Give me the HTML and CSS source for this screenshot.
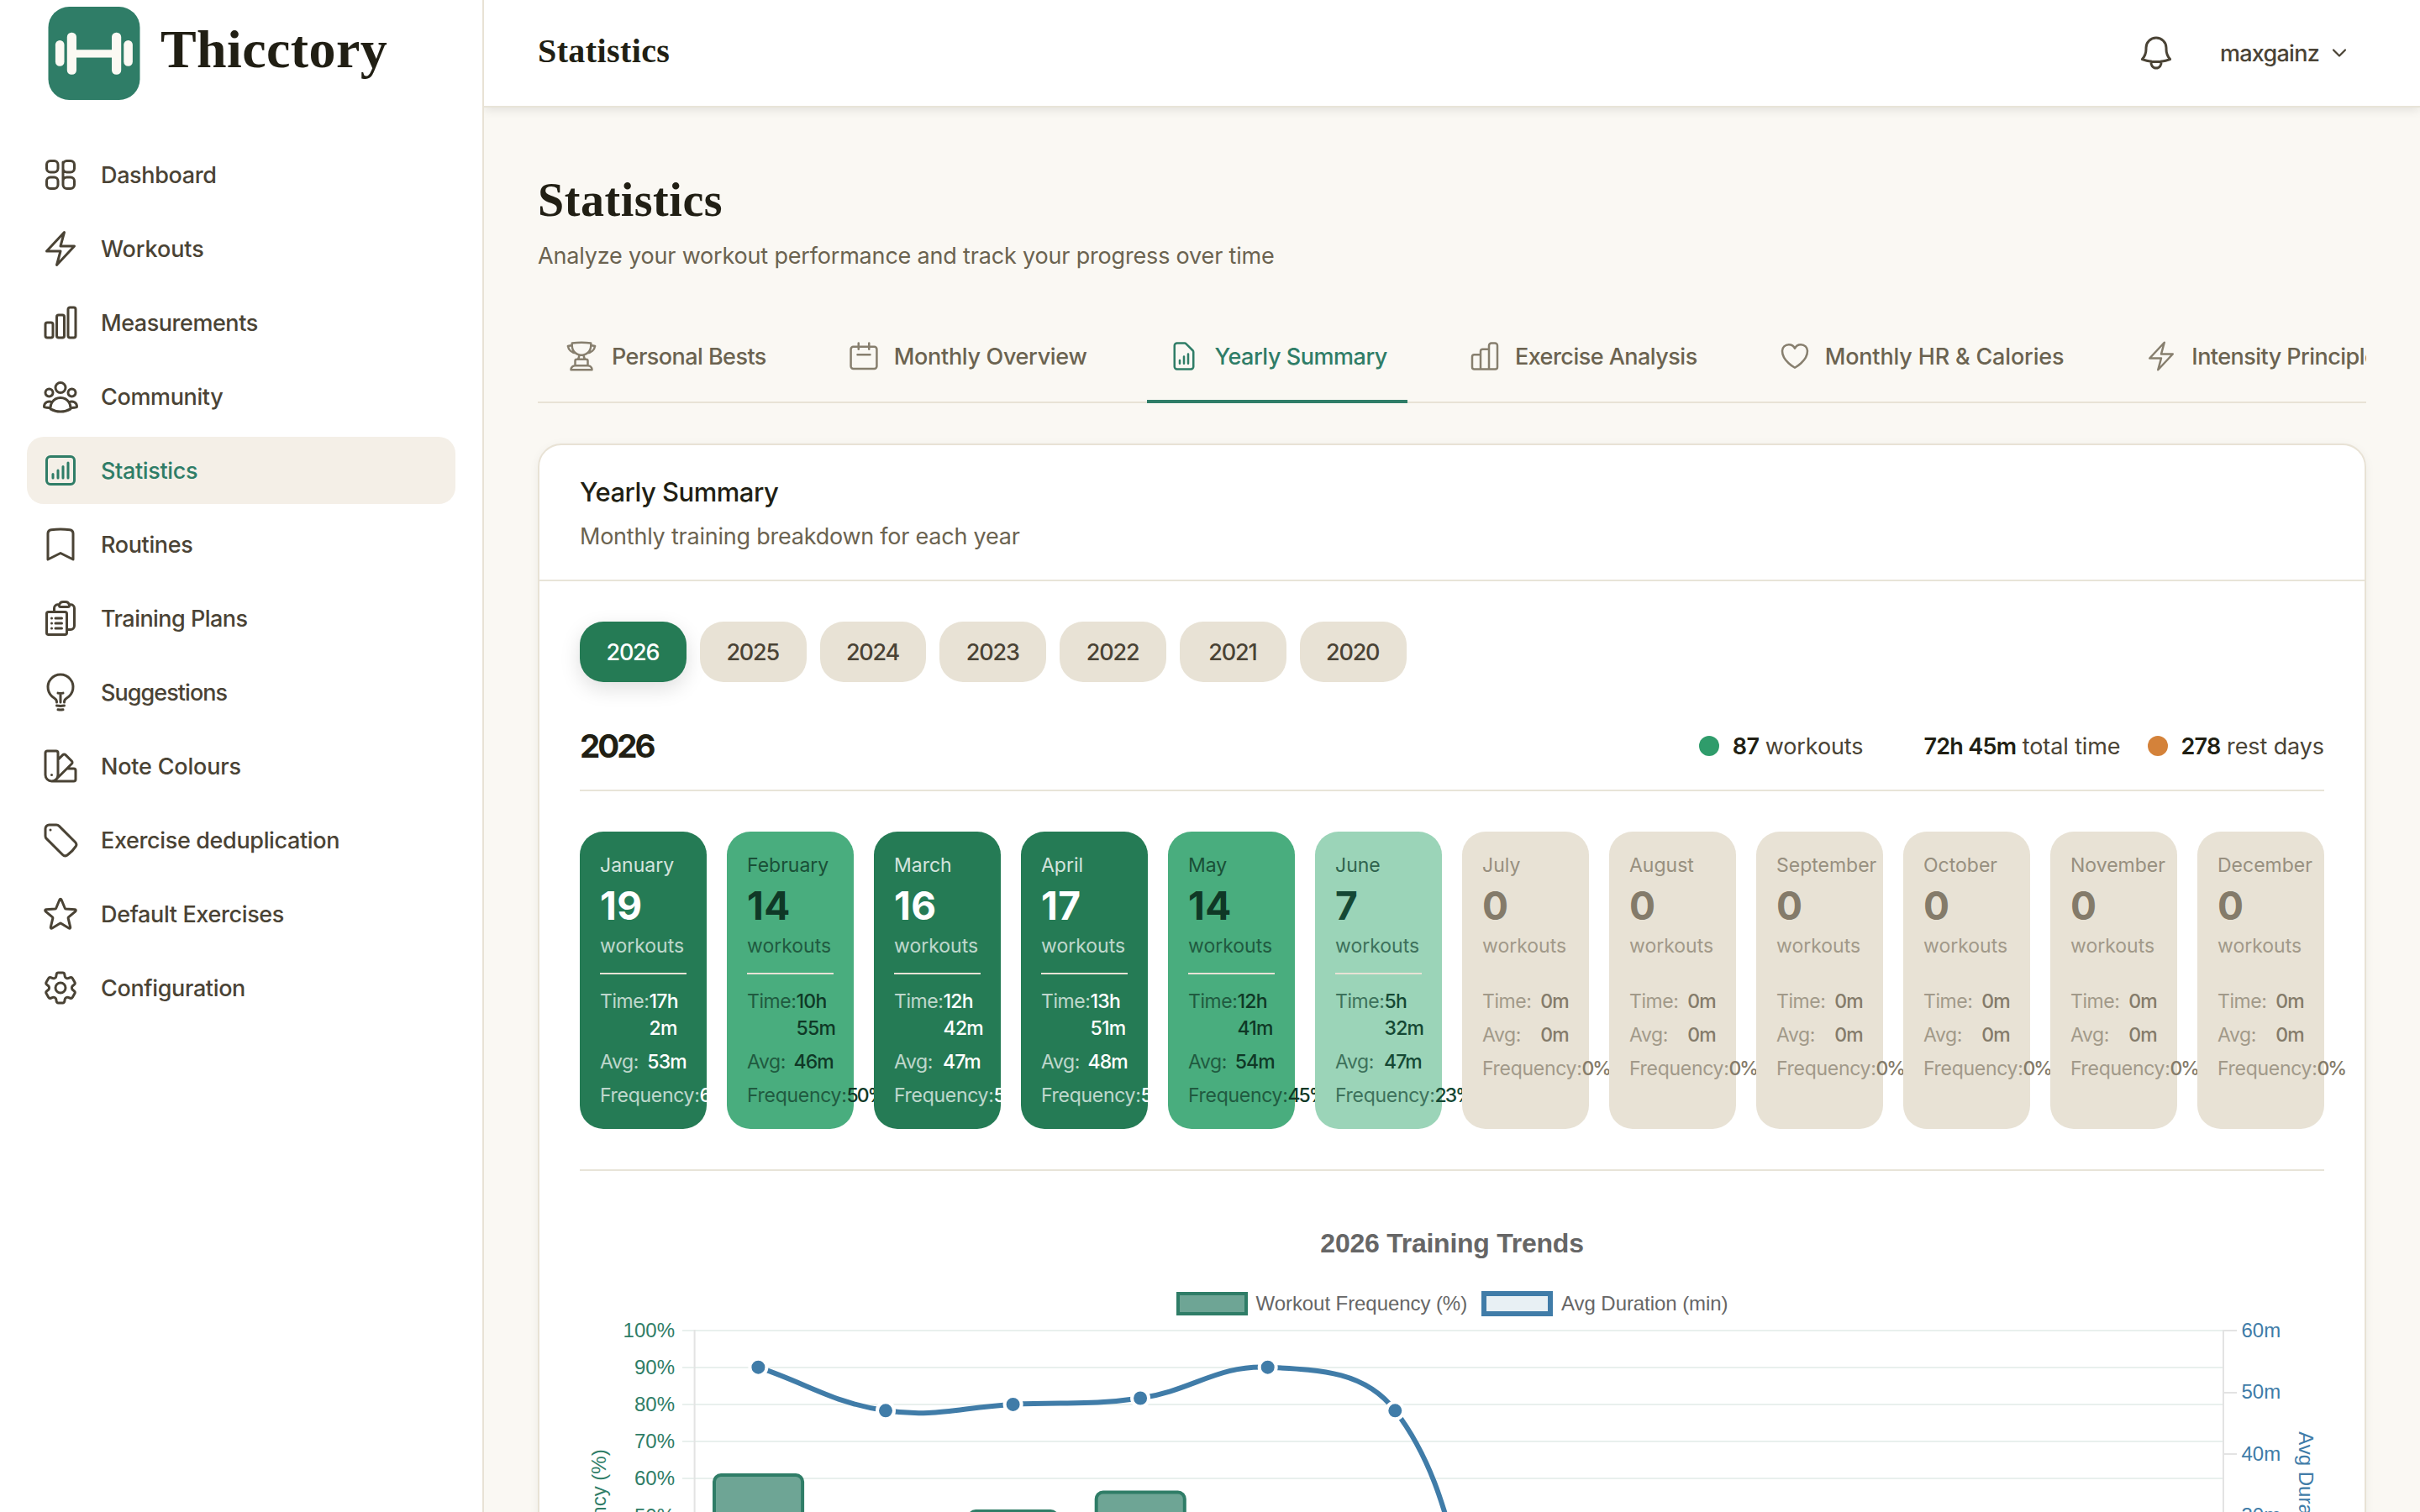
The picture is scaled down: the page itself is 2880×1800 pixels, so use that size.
FILE: index.html
```
<!DOCTYPE html>
<html lang="en">
<head>
<meta charset="utf-8">
<title>Statistics - Thicctory</title>
<link rel="stylesheet" href="styles.css">
</head>
<body>
<aside class="sidebar">
  <div class="brand">
    <svg class="brand-mark" viewBox="0 0 112 112"><rect x="1" y="0" width="110" height="112" rx="25" fill="#2f7d67"/><g fill="#fbf9f3"><rect x="9.5" y="40.3" width="10.7" height="31.2" rx="5.3"/><rect x="23.5" y="31" width="11.3" height="50.5" rx="5.3"/><rect x="33" y="51.7" width="46" height="9.4"/><rect x="77.2" y="31" width="11.3" height="50.5" rx="5.3"/><rect x="91.6" y="40.3" width="10.7" height="31.2" rx="5.3"/></g></svg>
    <span class="brand-name">Thicctory</span>
  </div>
  <nav class="nav">
    <a class="nav-item"><svg class="icon" viewBox="0 0 24 24"><path d="M3.75 6A2.25 2.25 0 0 1 6 3.75h2.25A2.25 2.25 0 0 1 10.5 6v2.25a2.25 2.25 0 0 1-2.25 2.25H6a2.25 2.25 0 0 1-2.25-2.25V6ZM3.75 15.75A2.25 2.25 0 0 1 6 13.5h2.25a2.25 2.25 0 0 1 2.25 2.25V18a2.25 2.25 0 0 1-2.25 2.25H6A2.25 2.25 0 0 1 3.75 18v-2.25ZM13.5 6a2.25 2.25 0 0 1 2.25-2.25H18A2.25 2.25 0 0 1 20.25 6v2.25A2.25 2.25 0 0 1 18 10.5h-2.25a2.25 2.25 0 0 1-2.25-2.25V6ZM13.5 15.75a2.25 2.25 0 0 1 2.25-2.25H18a2.25 2.25 0 0 1 2.25 2.25V18A2.25 2.25 0 0 1 18 20.25h-2.25A2.25 2.25 0 0 1 13.5 18v-2.25ZM13.5 4.5v12"/></svg>Dashboard</a>
    <a class="nav-item"><svg class="icon" viewBox="0 0 24 24"><path d="m3.75 13.5 10.5-11.25L12 10.5h8.25L9.75 21.75 12 13.5H3.75Z"/></svg>Workouts</a>
    <a class="nav-item"><svg class="icon" viewBox="0 0 24 24"><path d="M3 13.125C3 12.504 3.504 12 4.125 12h2.25c.621 0 1.125.504 1.125 1.125v6.75C7.5 20.496 6.996 21 6.375 21h-2.25A1.125 1.125 0 0 1 3 19.875v-6.75ZM9.75 8.625c0-.621.504-1.125 1.125-1.125h2.25c.621 0 1.125.504 1.125 1.125v11.25c0 .621-.504 1.125-1.125 1.125h-2.25a1.125 1.125 0 0 1-1.125-1.125V8.625ZM16.5 4.125c0-.621.504-1.125 1.125-1.125h2.25C20.496 3 21 3.504 21 4.125v15.75c0 .621-.504 1.125-1.125 1.125h-2.25a1.125 1.125 0 0 1-1.125-1.125V4.125Z"/></svg>Measurements</a>
    <a class="nav-item"><svg class="icon" viewBox="0 0 24 24"><path d="M18 18.72a9.094 9.094 0 0 0 3.741-.479 3 3 0 0 0-4.682-2.72m.94 3.198.001.031c0 .225-.012.447-.037.666A11.944 11.944 0 0 1 12 21c-2.17 0-4.207-.576-5.963-1.584A6.062 6.062 0 0 1 6 18.719m12 0a5.971 5.971 0 0 0-.941-3.197m0 0A5.995 5.995 0 0 0 12 12.75a5.995 5.995 0 0 0-5.058 2.772m0 0a3 3 0 0 0-4.681 2.72 8.986 8.986 0 0 0 3.74.477m.94-3.197a5.971 5.971 0 0 0-.94 3.197M15 6.75a3 3 0 1 1-6 0 3 3 0 0 1 6 0Zm6 3a2.25 2.25 0 1 1-4.5 0 2.25 2.25 0 0 1 4.5 0Zm-13.5 0a2.25 2.25 0 1 1-4.5 0 2.25 2.25 0 0 1 4.5 0Z"/></svg>Community</a>
    <a class="nav-item active"><svg class="icon" viewBox="0 0 24 24"><path d="M7.5 14.25v2.25m3-4.5v4.5m3-6.75v6.75m3-9v9M6 20.25h12A2.25 2.25 0 0 0 20.25 18V6A2.25 2.25 0 0 0 18 3.75H6A2.25 2.25 0 0 0 3.75 6v12A2.25 2.25 0 0 0 6 20.25Z"/></svg>Statistics</a>
    <a class="nav-item"><svg class="icon" viewBox="0 0 24 24"><path d="M17.593 3.322c1.1.128 1.907 1.077 1.907 2.185V21L12 17.25 4.5 21V5.507c0-1.108.806-2.057 1.907-2.185a48.507 48.507 0 0 1 11.186 0Z"/></svg>Routines</a>
    <a class="nav-item"><svg class="icon" viewBox="0 0 24 24"><path d="M9 12h3.75M9 15h3.75M9 18h3.75m3 .75H18a2.25 2.25 0 0 0 2.25-2.25V6.108c0-1.135-.845-2.098-1.976-2.192a48.424 48.424 0 0 0-1.123-.08m-5.801 0c-.065.21-.1.433-.1.664 0 .414.336.75.75.75h4.5a.75.75 0 0 0 .75-.75 2.25 2.25 0 0 0-.1-.664m-5.8 0A2.251 2.251 0 0 1 13.5 2.25H15c1.012 0 1.867.668 2.15 1.586m-5.8 0c-.376.023-.75.05-1.124.08C9.095 4.01 8.25 4.973 8.25 6.108V8.25m0 0H4.875c-.621 0-1.125.504-1.125 1.125v11.25c0 .621.504 1.125 1.125 1.125h9.75c.621 0 1.125-.504 1.125-1.125V9.375c0-.621-.504-1.125-1.125-1.125H8.25ZM6.75 12h.008v.008H6.75V12Zm0 3h.008v.008H6.75V15Zm0 3h.008v.008H6.75V18Z"/></svg>Training Plans</a>
    <a class="nav-item"><svg class="icon" viewBox="0 0 24 24"><path d="M12 18v-5.25m0 0a6.01 6.01 0 0 0 1.5-.189m-1.5.189a6.01 6.01 0 0 1-1.5-.189m3.75 7.478a12.06 12.06 0 0 1-4.5 0m3.75 2.383a14.406 14.406 0 0 1-3 0M14.25 18v-.192c0-.983.658-1.823 1.508-2.316a7.5 7.5 0 1 0-7.517 0c.85.493 1.509 1.333 1.509 2.316V18"/></svg>Suggestions</a>
    <a class="nav-item"><svg class="icon" viewBox="0 0 24 24"><path d="M4.098 19.902a3.75 3.75 0 0 0 5.304 0l6.401-6.402M6.75 21A3.75 3.75 0 0 1 3 17.25V4.125C3 3.504 3.504 3 4.125 3h5.25c.621 0 1.125.504 1.125 1.125v4.072M6.75 21a3.75 3.75 0 0 0 3.75-3.75V8.197M6.75 21h13.125c.621 0 1.125-.504 1.125-1.125v-5.25c0-.621-.504-1.125-1.125-1.125h-4.072M10.5 8.197l2.88-2.88c.438-.439 1.15-.439 1.59 0l3.712 3.713c.44.44.44 1.152 0 1.59l-2.879 2.88M6.75 17.25h.008v.008H6.75v-.008Z"/></svg>Note Colours</a>
    <a class="nav-item"><svg class="icon" viewBox="0 0 24 24"><path d="M9.568 3H5.25A2.25 2.25 0 0 0 3 5.25v4.318c0 .597.237 1.17.659 1.591l9.581 9.581c.699.699 1.78.872 2.607.33a18.095 18.095 0 0 0 5.223-5.223c.542-.827.369-1.908-.33-2.607L11.16 3.66A2.25 2.25 0 0 0 9.568 3ZM6 6h.008v.008H6V6Z"/></svg>Exercise deduplication</a>
    <a class="nav-item"><svg class="icon" viewBox="0 0 24 24"><path d="M11.48 3.499a.562.562 0 0 1 1.04 0l2.125 5.111a.563.563 0 0 0 .475.345l5.518.442c.499.04.701.663.321.988l-4.204 3.602a.563.563 0 0 0-.182.557l1.285 5.385a.562.562 0 0 1-.84.61l-4.725-2.885a.562.562 0 0 0-.586 0L6.982 20.54a.562.562 0 0 1-.84-.61l1.285-5.386a.562.562 0 0 0-.182-.557l-4.204-3.602a.562.562 0 0 1 .321-.988l5.518-.442a.563.563 0 0 0 .475-.345L11.48 3.5Z"/></svg>Default Exercises</a>
    <a class="nav-item"><svg class="icon" viewBox="0 0 24 24"><path d="M9.594 3.94c.09-.542.56-.94 1.11-.94h2.593c.55 0 1.02.398 1.11.94l.213 1.281c.063.374.313.686.645.87.074.04.147.083.22.127.325.196.72.257 1.075.124l1.217-.456a1.125 1.125 0 0 1 1.37.49l1.296 2.247a1.125 1.125 0 0 1-.26 1.431l-1.003.827c-.293.241-.438.613-.43.992a7.723 7.723 0 0 1 0 .255c-.008.378.137.75.43.991l1.004.827c.424.35.534.955.26 1.43l-1.298 2.247a1.125 1.125 0 0 1-1.369.491l-1.217-.456c-.355-.133-.75-.072-1.076.124a6.47 6.47 0 0 1-.22.128c-.331.183-.581.495-.644.869l-.213 1.281c-.09.543-.56.94-1.11.94h-2.594c-.55 0-1.019-.398-1.11-.94l-.213-1.281c-.062-.374-.312-.686-.644-.87a6.52 6.52 0 0 1-.22-.127c-.325-.196-.72-.257-1.076-.124l-1.217.456a1.125 1.125 0 0 1-1.369-.49l-1.297-2.247a1.125 1.125 0 0 1 .26-1.431l1.004-.827c.292-.24.437-.613.43-.991a6.932 6.932 0 0 1 0-.255c.007-.38-.138-.751-.43-.992l-1.004-.827a1.125 1.125 0 0 1-.26-1.43l1.297-2.247a1.125 1.125 0 0 1 1.37-.491l1.216.456c.356.133.751.072 1.076-.124.072-.044.146-.086.22-.128.332-.183.582-.495.644-.869l.214-1.28ZM15 12a3 3 0 1 1-6 0 3 3 0 0 1 6 0Z"/></svg>Configuration</a>
  </nav>
</aside>
<div class="page">
  <header class="topbar">
    <span class="topbar-title">Statistics</span>
    <div class="topbar-actions">
      <svg class="icon" viewBox="0 0 24 24"><path d="M14.857 17.082a23.848 23.848 0 0 0 5.454-1.31A8.967 8.967 0 0 1 18 9.75V9A6 6 0 0 0 6 9v.75a8.967 8.967 0 0 1-2.312 6.022c1.733.64 3.56 1.085 5.455 1.31m5.714 0a24.255 24.255 0 0 1-5.714 0m5.714 0a3 3 0 1 1-5.714 0"/></svg>
      <span class="user">maxgainz</span>
      <svg class="chevron" viewBox="0 0 24 24"><path d="m5 8.5 7 7 7-7"/></svg>
    </div>
  </header>
  <main class="main">
    <h1 class="title">Statistics</h1>
    <p class="subtitle">Analyze your workout performance and track your progress over time</p>
    <div class="tabs">
      <a class="tab"><svg class="icon" viewBox="0 0 24 24"><path d="M16.5 18.75h-9m9 0a3 3 0 0 1 3 3h-15a3 3 0 0 1 3-3m9 0v-3.375c0-.621-.503-1.125-1.125-1.125h-.871M7.5 18.75v-3.375c0-.621.504-1.125 1.125-1.125h.872m5.007 0H9.497m5.007 0a7.454 7.454 0 0 1-.982-3.172M9.497 14.25a7.454 7.454 0 0 0 .981-3.172M5.25 4.236c-.982.143-1.954.317-2.916.52A6.003 6.003 0 0 0 7.73 9.728M5.25 4.236V4.5c0 2.108.966 3.99 2.48 5.228M5.25 4.236V2.721C7.456 2.41 9.71 2.25 12 2.25c2.291 0 4.545.16 6.75.47v1.516M7.73 9.728a6.726 6.726 0 0 0 2.748 1.35m8.272-6.842V4.5c0 2.108-.966 3.99-2.48 5.228m2.48-5.492a46.32 46.32 0 0 1 2.916.52 6.003 6.003 0 0 1-5.395 4.972m0 0a6.726 6.726 0 0 1-2.749 1.35m0 0a6.772 6.772 0 0 1-3.044 0"/></svg><span>Personal Bests</span></a>
      <a class="tab"><svg class="icon" viewBox="0 0 24 24"><path d="M8.25 2.75V7m7.5-4.25V7M7.5 11h9M4.5 5.25h15A1.75 1.75 0 0 1 21.25 7v12.25A1.75 1.75 0 0 1 19.5 21h-15a1.75 1.75 0 0 1-1.75-1.75V7A1.75 1.75 0 0 1 4.5 5.25Z"/></svg><span>Monthly Overview</span></a>
      <a class="tab active"><svg class="icon" viewBox="0 0 24 24"><path d="M9 15v2.25m3-5v5m3-6.75v6.75M7 2.75h5.5a1.5 1.5 0 0 1 1.05.45l4.75 4.75a1.5 1.5 0 0 1 .45 1.05v10.5A1.75 1.75 0 0 1 17 21.25H7a1.75 1.75 0 0 1-1.75-1.75v-15A1.75 1.75 0 0 1 7 2.75Z"/></svg><span>Yearly Summary</span></a>
      <a class="tab"><svg class="icon" viewBox="0 0 24 24"><path d="M9 21V8.5A1.5 1.5 0 0 1 10.5 7H15M9 11H4.5A1.5 1.5 0 0 0 3 12.500v7.250A1.500 1.500 0 0 0 4.500 21.250h15A1.500 1.500 0 0 0 21 19.750V4.500A1.750 1.750 0 0 0 19.250 2.750h-2.500A1.750 1.750 0 0 0 15 4.500V21"/></svg><span>Exercise Analysis</span></a>
      <a class="tab"><svg class="icon" viewBox="0 0 24 24"><path d="M21 8.25c0-2.485-2.099-4.5-4.688-4.5-1.935 0-3.597 1.126-4.312 2.733-.715-1.607-2.377-2.733-4.313-2.733C5.1 3.75 3 5.765 3 8.25c0 7.22 9 12 9 12s9-4.78 9-12Z"/></svg><span>Monthly HR &amp; Calories</span></a>
      <a class="tab"><svg class="icon" viewBox="0 0 24 24"><path d="m3.75 13.5 10.5-11.25L12 10.5h8.25L9.75 21.75 12 13.5H3.75Z"/></svg><span>Intensity Principles</span></a>
    </div>
    <section class="card">
      <div class="card-head">
        <h2 class="card-title">Yearly Summary</h2>
        <p class="card-sub">Monthly training breakdown for each year</p>
      </div>
      <div class="card-body">
        <div class="years">
          <span class="year active">2026</span><span class="year">2025</span><span class="year">2024</span><span class="year">2023</span><span class="year">2022</span><span class="year">2021</span><span class="year">2020</span>
        </div>
        <div class="year-head">
          <h3 class="year-title">2026</h3>
          <div class="totals">
            <span class="total"><i class="dot green"></i><span><b>87</b> workouts</span></span>
            <span class="total"><i class="dot"></i><span><b>72h 45m</b> total time</span></span>
            <span class="total"><i class="dot orange"></i><span><b>278</b> rest days</span></span>
          </div>
        </div>
        <div class="months">
          <div class="month high"><div class="name">January</div><div class="count">19</div><div class="unit">workouts</div><div class="stats"><div><span>Time:</span><b>17h 2m</b></div><div><span>Avg:</span><b>53m</b></div><div><span>Frequency:</span><b>61%</b></div></div></div>
          <div class="month mid"><div class="name">February</div><div class="count">14</div><div class="unit">workouts</div><div class="stats"><div><span>Time:</span><b>10h 55m</b></div><div><span>Avg:</span><b>46m</b></div><div><span>Frequency:</span><b>50%</b></div></div></div>
          <div class="month high"><div class="name">March</div><div class="count">16</div><div class="unit">workouts</div><div class="stats"><div><span>Time:</span><b>12h 42m</b></div><div><span>Avg:</span><b>47m</b></div><div><span>Frequency:</span><b>52%</b></div></div></div>
          <div class="month high"><div class="name">April</div><div class="count">17</div><div class="unit">workouts</div><div class="stats"><div><span>Time:</span><b>13h 51m</b></div><div><span>Avg:</span><b>48m</b></div><div><span>Frequency:</span><b>57%</b></div></div></div>
          <div class="month mid"><div class="name">May</div><div class="count">14</div><div class="unit">workouts</div><div class="stats"><div><span>Time:</span><b>12h 41m</b></div><div><span>Avg:</span><b>54m</b></div><div><span>Frequency:</span><b>45%</b></div></div></div>
          <div class="month low"><div class="name">June</div><div class="count">7</div><div class="unit">workouts</div><div class="stats"><div><span>Time:</span><b>5h 32m</b></div><div><span>Avg:</span><b>47m</b></div><div><span>Frequency:</span><b>23%</b></div></div></div>
          <div class="month"><div class="name">July</div><div class="count">0</div><div class="unit">workouts</div><div class="stats"><div><span>Time:</span><b>0m</b></div><div><span>Avg:</span><b>0m</b></div><div><span>Frequency:</span><b>0%</b></div></div></div>
          <div class="month"><div class="name">August</div><div class="count">0</div><div class="unit">workouts</div><div class="stats"><div><span>Time:</span><b>0m</b></div><div><span>Avg:</span><b>0m</b></div><div><span>Frequency:</span><b>0%</b></div></div></div>
          <div class="month"><div class="name">September</div><div class="count">0</div><div class="unit">workouts</div><div class="stats"><div><span>Time:</span><b>0m</b></div><div><span>Avg:</span><b>0m</b></div><div><span>Frequency:</span><b>0%</b></div></div></div>
          <div class="month"><div class="name">October</div><div class="count">0</div><div class="unit">workouts</div><div class="stats"><div><span>Time:</span><b>0m</b></div><div><span>Avg:</span><b>0m</b></div><div><span>Frequency:</span><b>0%</b></div></div></div>
          <div class="month"><div class="name">November</div><div class="count">0</div><div class="unit">workouts</div><div class="stats"><div><span>Time:</span><b>0m</b></div><div><span>Avg:</span><b>0m</b></div><div><span>Frequency:</span><b>0%</b></div></div></div>
          <div class="month"><div class="name">December</div><div class="count">0</div><div class="unit">workouts</div><div class="stats"><div><span>Time:</span><b>0m</b></div><div><span>Avg:</span><b>0m</b></div><div><span>Frequency:</span><b>0%</b></div></div></div>
        </div>
        <div class="chart">
          <div class="chart-title">2026 Training Trends</div>
          <div class="legend">
            <span class="key"><i class="swatch bars"></i>Workout Frequency (%)</span>
            <span class="key"><i class="swatch line"></i>Avg Duration (min)</span>
          </div>
          <svg class="plot" viewBox="690 1568 2076 500">
            <g class="grid"><path d="M812 1585H2646M812 1629H2646M812 1673H2646M812 1717H2646M812 1761H2646M812 1806H2646M812 1850H2646M812 1894H2646M812 1938H2646M812 1982H2646M812 2026H2646"/></g>
            <g class="axis"><path d="M826.600 1584V2026M2646 1584V2026M2646 1585H2662M2646 1659H2662M2646 1732H2662M2646 1806H2662M2646 1879H2662"/></g>
            <g class="bar">
              <path d="M850 2026V1765a8 8 0 0 1 8-8h89.100a8 8 0 0 1 8 8V2026"/>
              <path d="M1001.600 2026V1815a8 8 0 0 1 8-8h89.100a8 8 0 0 1 8 8V2026"/>
              <path d="M1153.200 2026V1808a8 8 0 0 1 8-8h89.100a8 8 0 0 1 8 8V2026"/>
              <path d="M1304.700 2026V1785.600a8 8 0 0 1 8-8h89.100a8 8 0 0 1 8 8V2026"/>
            </g>
            <path class="curve" d="M902.400 1628.700C963 1649.300 991.800 1671.200 1054 1680.300C1113 1688.900 1145 1675.900 1205.600 1672.900C1266.200 1669.900 1297.300 1674.200 1357.100 1665.500C1418.500 1656.500 1448.800 1625.800 1508.700 1628.700C1570.100 1631.700 1624.200 1633 1660.300 1680.300C1745.500 1792 1725.400 1927 1811.900 2026"/>
            <g class="points"><circle cx="902.400" cy="1628.700" r="10"/><circle cx="1054" cy="1680.300" r="10"/><circle cx="1205.600" cy="1672.900" r="10"/><circle cx="1357.100" cy="1665.500" r="10"/><circle cx="1508.700" cy="1628.700" r="10"/><circle cx="1660.300" cy="1680.300" r="10"/></g>
            <g class="ticks left"><text x="803" y="1592.500">100%</text><text x="803" y="1636.500">90%</text><text x="803" y="1681">80%</text><text x="803" y="1725">70%</text><text x="803" y="1769">60%</text><text x="803" y="1813.500">50%</text><text class="axis-name" transform="translate(720.500 1805) rotate(-90)">Frequency (%)</text></g>
            <g class="ticks right"><text x="2667.500" y="1592.500">60m</text><text x="2667.500" y="1666">50m</text><text x="2667.500" y="1739.500">40m</text><text x="2667.500" y="1813">30m</text><text class="axis-name" transform="translate(2736 1805) rotate(90)">Avg Duration (min)</text></g>
          </svg>
        </div>
      </div>
    </section>
  </main>
</div>
</body>
</html>
```
FILE: styles.css
```
* { box-sizing: border-box; margin: 0; padding: 0; }
html, body { height: 1800px; overflow: hidden; }
body {
  display: flex;
  background: #faf8f3;
  color: #4a4335;
  font-family: Inter, "Liberation Sans", sans-serif;
  font-size: 27px;
}
.icon { flex: none; width: 48px; height: 48px; fill: none; stroke: currentColor; stroke-width: 1.5; stroke-linecap: round; stroke-linejoin: round; }

/* sidebar */
.sidebar { flex: none; width: 576px; height: 1800px; background: #fff; border-right: 2px solid #e8e2d5; }
.brand { display: flex; align-items: center; gap: 23px; padding: 8px 56px 0; }
.brand-mark { width: 112px; height: 111px; }
.brand-name { margin-bottom: 9px; font: 700 64px/64px "Liberation Serif", serif; letter-spacing: .4px; color: #211f14; }
.nav { display: flex; flex-direction: column; gap: 8px; padding: 49px 32px 0; }
.nav-item { display: flex; align-items: center; gap: 24px; height: 80px; padding: 0 16px; border-radius: 20px; font-weight: 500; letter-spacing: -.36px; }
.nav-item:nth-child(2) { letter-spacing: -.1px; }
.nav-item:nth-child(3) { letter-spacing: -.46px; }
.nav-item:nth-child(7) { letter-spacing: -.54px; }
.nav-item:nth-child(8) { letter-spacing: -.95px; }
.nav-item:nth-child(9) { letter-spacing: -.2px; }
.nav-item.active { background: #f4efe7; color: #2f7d67; }

/* top bar */
.page { flex: 1; min-width: 0; overflow: hidden; }
.topbar { display: flex; align-items: center; justify-content: space-between; height: 128px; padding: 0 84px 0 64px; background: #fff; border-bottom: 2px solid #e8e4d8; box-shadow: 0 2px 12px rgba(0, 0, 0, .11); }
.topbar-title { padding-bottom: 4px; font: 700 40px/48px "Liberation Serif", serif; letter-spacing: .4px; color: #211f14; }
.topbar-actions { display: flex; align-items: center; }
.user { margin-left: 52px; font-weight: 500; letter-spacing: -.75px; }
.chevron { width: 24px; height: 24px; margin-left: 12px; fill: none; stroke: currentColor; stroke-width: 2.2; stroke-linecap: round; stroke-linejoin: round; }

/* page heading */
.main { padding: 78px 64px 0; }
.title { font: 700 56px/64px "Liberation Serif", serif; letter-spacing: .55px; color: #211f14; }
.subtitle { margin-top: 15px; line-height: 40px; letter-spacing: -.18px; color: #6b6350; }

/* tabs */
.tabs { display: flex; gap: 48px; height: 108px; margin-top: 47px; padding-left: 8px; overflow: hidden; box-shadow: inset 0 -2px #e8e2d5; white-space: nowrap; }
.tab { flex: none; display: flex; align-items: center; gap: 16px; padding: 0 24px; border-bottom: 4px solid transparent; font-weight: 500; letter-spacing: -.55px; color: #6b6350; }
.tab .icon { width: 40px; height: 40px; color: #877f6e; }
.tab:nth-child(2) { letter-spacing: -.33px; }
.tab:nth-child(3) { letter-spacing: -.46px; }
.tab:nth-child(4) { letter-spacing: -.52px; }
.tab:nth-child(5) { letter-spacing: -.17px; }
.tab.active, .tab.active .icon { color: #2f7d67; }
.tab.active { border-color: #2f7d67; }

/* card */
.card { margin-top: 48px; background: #fff; border: 2px solid #e8e2d5; border-radius: 28px; box-shadow: 0 2px 12px rgba(0, 0, 0, .05); }
.card-head { height: 162px; padding: 34px 48px 0; border-bottom: 2px solid #e8e4d8; }
.card-title { font-size: 31px; font-weight: 500; line-height: 44px; letter-spacing: -.5px; color: #211f14; }
.card-sub { margin-top: 11px; line-height: 40px; letter-spacing: -.23px; color: #6b6350; }
.card-body { padding: 48px; }

.years { display: flex; gap: 16px; }
.year { width: 126.8px; height: 72px; padding-right: 1px; border-radius: 28px; background: #e8e2d5; line-height: 73px; text-align: center; font-weight: 500; letter-spacing: -1.2px; }
.year.active { background: #257b55; color: #fff; box-shadow: 0 8px 24px rgba(0, 0, 0, .13); }
.year-head { display: flex; align-items: center; justify-content: space-between; margin-top: 48px; padding-bottom: 24px; border-bottom: 2px solid #e8e4d8; }
.year-title { font-size: 38.5px; font-weight: 700; line-height: 56px; letter-spacing: -3px; color: #211f14; }
.totals { display: flex; gap: 32px; }
.total { display: flex; align-items: center; gap: 16px; letter-spacing: -.1px; }
.total b { font-weight: 600; letter-spacing: -.75px; color: #211f14; }
.dot { width: 24px; height: 24px; border-radius: 50%; }
.dot.green { background: #2f9c6b; }
.dot.orange { background: #d4823a; }

/* months */
.months { display: grid; grid-template-columns: repeat(12, 1fr); gap: 24px; margin-top: 48px; }
.month { position: relative; z-index: 0; min-width: 0; height: 354px; padding: 24px; border-radius: 28px; background: #e8e2d5; color: #847b6a; font-size: 23px; line-height: 32px; }
.month.high { background: #257b55; color: #fff; }
.month.mid { background: #49ad7e; color: #0f3826; }
.month.low { background: #9bd4b8; color: #154834; }
.name { opacity: .8; }
.count { font-size: 46px; font-weight: 700; line-height: 64px; letter-spacing: .5px; }
.unit { opacity: .7; }
.stats { display: flex; flex-direction: column; gap: 8px; margin-top: 16px; padding-top: 16px; border-top: 2px solid #e8e2d5; }
.stats div { display: flex; justify-content: space-between; }
.stats span { opacity: .7; letter-spacing: -.4px; }
.stats b { font-weight: 500; letter-spacing: -.8px; }
.stats div:last-child span { letter-spacing: -.3px; }
.stats div:last-child b { letter-spacing: -2px; }

/* chart */
.chart { display: flex; flex-direction: column; height: 800px; margin-top: 48px; padding-top: 64px; border-top: 2px solid #e8e4d8; font-family: "Liberation Sans", Arial, sans-serif; color: #666; }
.chart-title { text-align: center; font-size: 32px; font-weight: 700; line-height: 44px; letter-spacing: -.25px; }
.legend { display: flex; justify-content: center; gap: 17px; margin-top: 32px; font-size: 24px; line-height: 36px; letter-spacing: -.07px; }
.key { display: flex; align-items: center; gap: 10px; }
.swatch { width: 85px; height: 28px; background: #6ea595; border: 4px solid #2f7d67; }
.swatch.line { height: 30px; background: #e8f0f4; border: 6px solid #407ca8; }
.plot { flex: none; width: 2076px; height: 500px; margin-top: -3px; fill: none; }
.grid { stroke: #e9f0ed; stroke-width: 2; }
.axis { stroke: #e3e3e3; stroke-width: 2; }
.bar { fill: #6ea595; stroke: #2f7d67; stroke-width: 4; }
.curve { stroke: #407ca8; stroke-width: 6; }
.points { fill: #407ca8; stroke: #fff; stroke-width: 4; }
.ticks { font-size: 24px; }
.ticks.left { fill: #2f7d67; text-anchor: end; }
.ticks.right { fill: #407ca8; }
.ticks .axis-name { text-anchor: middle; }
```
